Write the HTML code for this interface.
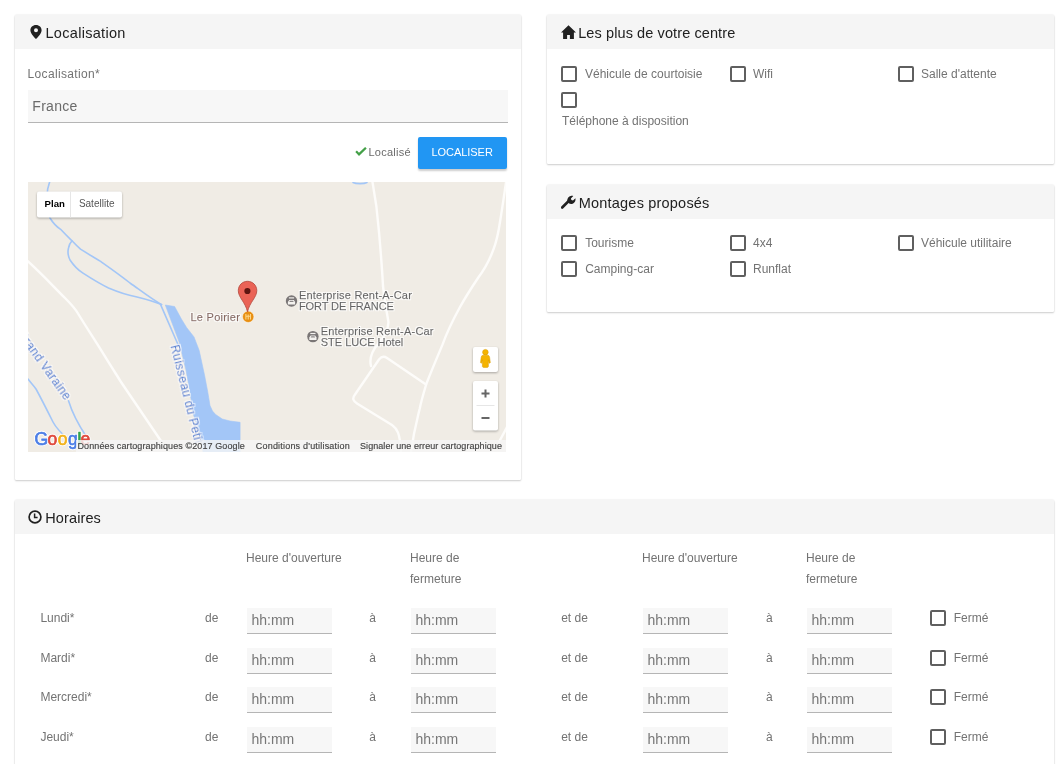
<!DOCTYPE html><html><head><meta charset="utf-8"><style>
*{box-sizing:border-box;margin:0;padding:0}
html,body{width:1064px;height:764px;overflow:hidden;background:#fff;font-family:"Liberation Sans",sans-serif}
#root{position:absolute;left:0;top:0;width:1064px;height:764px;will-change:transform}
.card{position:absolute;background:#fff;border-radius:1px;overflow:hidden;box-shadow:0 1px 2px 0 rgba(0,0,0,.18),0 0 1.5px 0 rgba(0,0,0,.16)}
.hd{position:absolute;left:0;top:0;right:0;height:34px;background:#f5f5f5}
.t{position:absolute;white-space:nowrap;line-height:1}
.cb{position:absolute;width:16px;height:16px;border:2px solid #5f5f5f;border-radius:2px}
.inp{position:absolute;background:#f7f7f7;border-bottom:1px solid #b5b5b5}
</style></head><body><div id="root">
<div class="card" style="left:15px;top:15px;width:506px;height:465px"><div class="hd"></div></div>
<div class="card" style="left:547px;top:15px;width:507px;height:149px"><div class="hd"></div></div>
<div class="card" style="left:547px;top:185px;width:507px;height:127px"><div class="hd"></div></div>
<div class="card" style="left:15px;top:500px;width:1039px;height:300px"><div class="hd"></div></div>
<svg style="position:absolute;left:30px;top:25px" width="12" height="14" viewBox="0 0 12 14"><path d="M6 0C2.7 0 0.4 2.4 0.4 5.4C0.4 8.6 6 14 6 14S11.6 8.6 11.6 5.4C11.6 2.4 9.3 0 6 0ZM6 3.2A2 2 0 1 1 6 7.2A2 2 0 1 1 6 3.2Z" fill="#212121" fill-rule="evenodd"/></svg>
<div class="t" style="left:45.5px;top:25.53px;font-size:14.5px;color:#212121;letter-spacing:0.3px">Localisation</div>
<div class="t" style="left:27.5px;top:67.94px;font-size:12px;color:#737373;letter-spacing:0.35px">Localisation*</div>
<div class="inp" style="left:28px;top:90px;width:480px;height:33px"></div>
<div class="t" style="left:32.3px;top:98.95px;font-size:14px;color:#6b6b6b;letter-spacing:0.3px">France</div>
<svg style="position:absolute;left:355px;top:147px" width="12" height="10" viewBox="0 0 12 10"><path d="M0.3 5L4 8.9L11.7 1.6L10.1 0L4 5.8L1.9 3.4Z" fill="#43a047"/></svg>
<div class="t" style="left:368.5px;top:146.99px;font-size:11px;color:#6b6b6b;letter-spacing:0.25px">Localisé</div>
<div style="position:absolute;left:418px;top:137px;width:89px;height:32px;background:#2196f3;border-radius:2px;box-shadow:0 2px 2px rgba(0,0,0,.2)"></div>
<div class="t" style="left:431.5px;top:146.99px;font-size:11px;color:#fff;letter-spacing:-0.05px">LOCALISER</div>
<svg style="position:absolute;left:28px;top:182px" width="478" height="270" viewBox="28 182 478 270">
<defs>
<filter id="halo" x="-10%" y="-30%" width="120%" height="160%"><feMorphology in="SourceAlpha" operator="dilate" radius="1"/><feGaussianBlur stdDeviation="0.5"/><feColorMatrix type="matrix" values="0 0 0 0 1  0 0 0 0 1  0 0 0 0 1  0 0 0 0.8 0"/><feMerge><feMergeNode/><feMergeNode in="SourceGraphic"/></feMerge></filter>
</defs>
<rect x="28" y="182" width="478" height="270" fill="#f0ece5"/>
<g fill="none" stroke="#fdfcfa" stroke-width="2.4" stroke-linecap="round" stroke-linejoin="round">
<path d="M27 260.5C40 272 52 285 65 298C72 305 76 310 78 313.5C88 330 97 343 104.5 355.7C112 368 118 377 121 382L161 441L168 452.5"/>
<path d="M372.3 181C375 195 377.5 212 379 232C381 255 382.3 272 383 286C385 305 388 318 388.4 322C388.5 330 384 337 378 344C372 351 369 358 371 366"/>
<path d="M506 182.5C504 196 502 210 500 222C498 235 496 243 493.5 249.2C489 262 484 270 478 278C470 290 465 298 460 307C454 318 447 332 442.4 344.9C436 360 431 372 426.3 384C423 395 421 402 419.7 408.7C417 420 414 430 411 452"/>
<path d="M426 384.5L387 358C384 356 381 357 379 359.5L355 394.5C352 398.5 353 401 357 403.5L392 425C397 428.5 400 433 401 452"/>
<path d="M507 427L499 442"/>
</g>
<g fill="none" stroke="#a3c6f7" stroke-width="1.6" stroke-linecap="round" stroke-linejoin="round">
<path d="M50 181C48 186 46.5 192 47 200C48 210 49 216 50 218C53 223 57 227 60.6 229.3C64 233 68 237 72 240.8C75 244 78 247 80.5 249.2C88 254 95 258 100.6 261.4C110 268 120 275 130 283C140 290 150 298 161.5 304.6"/>
<path d="M72 240.8C70 243 69 245 68.5 248C67.5 252 68 256 70 260C74 266 78 270 83 273.2C92 279 100 284 108.5 288C118 292 127 295 136 296.8C145 299 153 301 161.5 304.6"/>
<path d="M160.5 304.4L178.3 345.3"/>
<path d="M28 379C31 383 34 386 36 389C42 400 48 412 53 422C56 428 62 434 70 441"/>
<path d="M68.5 400.7C72 412 78 424 86 436"/>
<path d="M353 182.5C356 184 364 184 367 182.5"/>
</g>
<polygon points="165.3,305 174.6,306.5 181.4,319 186.6,327.5 194,336.9 199.2,350.5 204.5,375 207.8,392.2 210,405.6 212.5,411 215.6,414.5 222.3,419 230,421 240.1,422.3 240.1,452 203,452 201.2,436.7 193.4,414.5 190,392.2 186,370 179.2,342" fill="#a3c6f7" stroke="#a3c6f7" stroke-width="0.6" stroke-linejoin="round"/>
<g font-family="Liberation Sans" font-size="11" filter="url(#halo)" stroke-width="0.25">
<text stroke="#86665e" x="190.5" y="321.3" fill="#86665e" letter-spacing="0.25">Le Poirier</text>
<text stroke="#626262" x="299" y="298.5" fill="#626262" letter-spacing="0.2">Enterprise Rent-A-Car</text>
<text stroke="#626262" x="299" y="310.3" fill="#626262" letter-spacing="-0.1">FORT DE FRANCE</text>
<text stroke="#626262" x="320.7" y="334.7" fill="#626262" letter-spacing="0.2">Enterprise Rent-A-Car</text>
<text stroke="#626262" x="320.7" y="345.8" fill="#626262">STE LUCE Hotel</text>
<text stroke="#5a87d3" transform="translate(170.5,346) rotate(76)" fill="#5a87d3" font-size="12" letter-spacing="0.45">Ruisseau du Petit</text>
<text stroke="#5a87d3" text-anchor="end" transform="translate(65.3,401.3) rotate(54.4)" fill="#5a87d3" font-size="12" letter-spacing="0.45">Grand Varaine</text>
</g>
<!-- car icons -->
<g id="car1">
<circle cx="291.5" cy="301" r="5.7" fill="#7a7676"/>
<path d="M288.9 297.3H294.1V298.5H288.9Z" fill="#f4f2ef"/>
<path d="M287.9 304.4V301.9L289.2 299.9H293.8L295.1 301.9V304.4Z" fill="#f4f2ef"/>
<path d="M289.9 300.7H293.1L293.7 302H289.3Z" fill="#8a8686"/>
</g>
<use href="#car1" transform="translate(21.4,35.6)"/>
<!-- restaurant icon -->
<circle cx="248.2" cy="316.8" r="5.7" fill="#e88f12" stroke="#fff" stroke-width="0.5"/>
<path d="M245.9 313.9V319.6M248.2 314.6V319.6M250.5 313.9V319.6M245.9 316.3H250.5" stroke="#fcd78a" stroke-width="1.1"/>
<!-- marker -->
<path d="M247.5 281.3C242.3 281.3 238.3 285.4 238.3 290.6C238.3 297.5 245.3 302 247.5 311.8C249.7 302 256.8 297.5 256.8 290.6C256.8 285.4 252.7 281.3 247.5 281.3Z" fill="#ea6356" stroke="#b3463b" stroke-width="0.8"/>
<circle cx="247.4" cy="291" r="3.1" fill="#5e1510"/>
<!-- google logo -->
<g font-family="Liberation Sans" font-size="17.5" stroke="#fff" stroke-width="2.4" stroke-linejoin="round"><text x="34.5" y="445" fill="#fff">G</text><text x="47.6" y="445" fill="#fff">o</text><text x="57.8" y="445" fill="#fff">o</text><text x="68" y="445" fill="#fff">g</text><text x="77.6" y="445" fill="#fff">l</text><text x="80.5" y="445" fill="#fff">e</text></g>
<g font-family="Liberation Sans" font-size="17.5" stroke-width="0.7"><text x="34.5" y="445" fill="#4c7ee6" stroke="#4c7ee6">G</text><text x="47.6" y="445" fill="#df4a3c" stroke="#df4a3c">o</text><text x="57.8" y="445" fill="#f2b21a" stroke="#f2b21a">o</text><text x="68" y="445" fill="#4c7ee6" stroke="#4c7ee6">g</text><text x="77.6" y="445" fill="#32a350" stroke="#32a350">l</text><text x="80.5" y="445" fill="#df4a3c" stroke="#df4a3c">e</text></g>
<!-- attribution bar -->
<rect x="76" y="440" width="430" height="12" fill="#f5f5f5" fill-opacity="0.82"/>
<g font-family="Liberation Sans" font-size="9" fill="#444" stroke="#444" stroke-width="0.15">
<text x="77.5" y="448.8" letter-spacing="0.1">Données cartographiques ©2017 Google</text>
<text x="255.8" y="448.8" letter-spacing="0.2">Conditions d'utilisation</text>
<text x="360" y="448.8" letter-spacing="0.07">Signaler une erreur cartographique</text>
</g>
<!-- plan/satellite -->
<rect x="37" y="191.5" width="85" height="26" rx="2" fill="#fff" style="filter:drop-shadow(0 1px 1px rgba(0,0,0,.3))"/>
<line x1="70.5" y1="191.5" x2="70.5" y2="217.5" stroke="#e6e6e6" stroke-width="1"/>
<text x="44.6" y="206.8" font-family="Liberation Sans" font-size="9.6" font-weight="bold" fill="#000">Plan</text>
<text x="78.9" y="206.8" font-family="Liberation Sans" font-size="10" fill="#565656">Satellite</text>
<!-- pegman -->
<rect x="473" y="347" width="25" height="25" rx="2" fill="#fff" style="filter:drop-shadow(0 1px 1px rgba(0,0,0,.3))"/>
<g fill="#f5b400" stroke="#d99a00" stroke-width="0.5">
<circle cx="485.4" cy="352.2" r="2.8"/>
<path d="M483 355.2H487.8Q489.3 355.4 489.6 357.2L490.3 362.6Q490 363.5 489.1 363L488.4 359.8V366.6Q488.2 367.4 487.3 367.4H483.5Q482.6 367.4 482.4 366.6V359.8L481.7 363Q480.8 363.5 480.5 362.6L481.2 357.2Q481.5 355.4 483 355.2Z"/>
</g>
<!-- zoom -->
<rect x="473" y="381" width="25" height="49.5" rx="2" fill="#fff" style="filter:drop-shadow(0 1px 1px rgba(0,0,0,.3))"/>
<line x1="476.5" y1="405.5" x2="494.5" y2="405.5" stroke="#e6e6e6" stroke-width="1"/>
<path d="M481.5 393.5H489.5M485.5 389.5V397.5M481.5 418H489.5" stroke="#666" stroke-width="2"/>
</svg>

<svg style="position:absolute;left:561px;top:24.5px" width="15" height="14.5" viewBox="0 0 15 14.5"><path d="M7.5 0.3L0 7.6H2.1V14.3H6.1V10H8.9V14.3H12.9V7.6H15Z" fill="#212121"/></svg>
<div class="t" style="left:578.2px;top:25.53px;font-size:14.5px;color:#212121;letter-spacing:0.1px">Les plus de votre centre</div>
<div class="cb" style="left:561px;top:66px"></div>
<div class="t" style="left:585px;top:67.64px;font-size:12px;color:#737373;">Véhicule de courtoisie</div>
<div class="cb" style="left:730px;top:66px"></div>
<div class="t" style="left:753px;top:67.64px;font-size:12px;color:#737373;">Wifi</div>
<div class="cb" style="left:898px;top:66px"></div>
<div class="t" style="left:921px;top:67.64px;font-size:12px;color:#737373;">Salle d'attente</div>
<div class="cb" style="left:561px;top:92px"></div>
<div class="t" style="left:562px;top:114.64px;font-size:12px;color:#737373;">Téléphone à disposition</div>
<svg style="position:absolute;left:561px;top:195px" width="15" height="15" viewBox="0 0 15 15"><path d="M1.2 12.5L7.2 6.5" stroke="#212121" stroke-width="2.6" stroke-linecap="round"/><path d="M6.5 6.8C5.8 4.6 6.8 1.6 9.8 0.9C10.9 0.7 11.8 0.9 12.3 1.1L9.9 3.5L10.4 5.1L12 5.6L14.4 3.2C14.7 4.3 14.6 6.0 13.3 7.5C11.6 9.3 9.5 9.3 8.2 8.6Z" fill="#212121"/></svg>
<div class="t" style="left:578.8px;top:195.73px;font-size:14.5px;color:#212121;letter-spacing:0.2px">Montages proposés</div>
<div class="cb" style="left:561px;top:235px"></div>
<div class="t" style="left:585.2px;top:236.84px;font-size:12px;color:#737373;">Tourisme</div>
<div class="cb" style="left:730px;top:235px"></div>
<div class="t" style="left:753px;top:236.84px;font-size:12px;color:#737373;">4x4</div>
<div class="cb" style="left:898px;top:235px"></div>
<div class="t" style="left:921px;top:236.84px;font-size:12px;color:#737373;">Véhicule utilitaire</div>
<div class="cb" style="left:561px;top:261px"></div>
<div class="t" style="left:585.2px;top:263.14px;font-size:12px;color:#737373;">Camping-car</div>
<div class="cb" style="left:730px;top:261px"></div>
<div class="t" style="left:753px;top:263.14px;font-size:12px;color:#737373;">Runflat</div>
<svg style="position:absolute;left:28px;top:510px" width="14" height="14" viewBox="0 0 14 14"><circle cx="7" cy="7" r="5.9" fill="none" stroke="#212121" stroke-width="1.7"/><path d="M6.6 3.6V7.6H9.6" fill="none" stroke="#212121" stroke-width="1.5"/></svg>
<div class="t" style="left:45.3px;top:511.23px;font-size:14.5px;color:#212121;letter-spacing:0.1px">Horaires</div>
<div class="t" style="left:246px;top:552.24px;font-size:12px;color:#737373;">Heure d'ouverture</div>
<div class="t" style="left:642px;top:552.24px;font-size:12px;color:#737373;">Heure d'ouverture</div>
<div class="t" style="left:410px;top:552.24px;font-size:12px;color:#737373;">Heure de</div>
<div class="t" style="left:410px;top:572.84px;font-size:12px;color:#737373;">fermeture</div>
<div class="t" style="left:806px;top:552.24px;font-size:12px;color:#737373;">Heure de</div>
<div class="t" style="left:806px;top:572.84px;font-size:12px;color:#737373;">fermeture</div>
<div class="t" style="left:40.4px;top:612.14px;font-size:12px;color:#737373;">Lundi*</div>
<div class="t" style="left:205px;top:612.14px;font-size:12px;color:#737373;">de</div>
<div class="t" style="left:369.2px;top:612.14px;font-size:12px;color:#737373;">à</div>
<div class="t" style="left:561.2px;top:612.14px;font-size:12px;color:#737373;">et de</div>
<div class="t" style="left:766px;top:612.14px;font-size:12px;color:#737373;">à</div>
<div class="inp" style="left:247px;top:608px;width:85px;height:26px"></div>
<div class="t" style="left:251.5px;top:613.15px;font-size:14px;color:#777;">hh:mm</div>
<div class="inp" style="left:411px;top:608px;width:85px;height:26px"></div>
<div class="t" style="left:415.5px;top:613.15px;font-size:14px;color:#777;">hh:mm</div>
<div class="inp" style="left:643px;top:608px;width:85px;height:26px"></div>
<div class="t" style="left:647.5px;top:613.15px;font-size:14px;color:#777;">hh:mm</div>
<div class="inp" style="left:807px;top:608px;width:85px;height:26px"></div>
<div class="t" style="left:811.5px;top:613.15px;font-size:14px;color:#777;">hh:mm</div>
<div class="cb" style="left:929.8px;top:609.8px"></div>
<div class="t" style="left:953.7px;top:612.14px;font-size:12px;color:#737373;">Fermé</div>
<div class="t" style="left:40.4px;top:652.14px;font-size:12px;color:#737373;">Mardi*</div>
<div class="t" style="left:205px;top:652.14px;font-size:12px;color:#737373;">de</div>
<div class="t" style="left:369.2px;top:652.14px;font-size:12px;color:#737373;">à</div>
<div class="t" style="left:561.2px;top:652.14px;font-size:12px;color:#737373;">et de</div>
<div class="t" style="left:766px;top:652.14px;font-size:12px;color:#737373;">à</div>
<div class="inp" style="left:247px;top:648px;width:85px;height:26px"></div>
<div class="t" style="left:251.5px;top:653.15px;font-size:14px;color:#777;">hh:mm</div>
<div class="inp" style="left:411px;top:648px;width:85px;height:26px"></div>
<div class="t" style="left:415.5px;top:653.15px;font-size:14px;color:#777;">hh:mm</div>
<div class="inp" style="left:643px;top:648px;width:85px;height:26px"></div>
<div class="t" style="left:647.5px;top:653.15px;font-size:14px;color:#777;">hh:mm</div>
<div class="inp" style="left:807px;top:648px;width:85px;height:26px"></div>
<div class="t" style="left:811.5px;top:653.15px;font-size:14px;color:#777;">hh:mm</div>
<div class="cb" style="left:929.8px;top:649.8px"></div>
<div class="t" style="left:953.7px;top:652.14px;font-size:12px;color:#737373;">Fermé</div>
<div class="t" style="left:40.4px;top:691.34px;font-size:12px;color:#737373;">Mercredi*</div>
<div class="t" style="left:205px;top:691.34px;font-size:12px;color:#737373;">de</div>
<div class="t" style="left:369.2px;top:691.34px;font-size:12px;color:#737373;">à</div>
<div class="t" style="left:561.2px;top:691.34px;font-size:12px;color:#737373;">et de</div>
<div class="t" style="left:766px;top:691.34px;font-size:12px;color:#737373;">à</div>
<div class="inp" style="left:247px;top:687px;width:85px;height:26px"></div>
<div class="t" style="left:251.5px;top:692.15px;font-size:14px;color:#777;">hh:mm</div>
<div class="inp" style="left:411px;top:687px;width:85px;height:26px"></div>
<div class="t" style="left:415.5px;top:692.15px;font-size:14px;color:#777;">hh:mm</div>
<div class="inp" style="left:643px;top:687px;width:85px;height:26px"></div>
<div class="t" style="left:647.5px;top:692.15px;font-size:14px;color:#777;">hh:mm</div>
<div class="inp" style="left:807px;top:687px;width:85px;height:26px"></div>
<div class="t" style="left:811.5px;top:692.15px;font-size:14px;color:#777;">hh:mm</div>
<div class="cb" style="left:929.8px;top:688.8px"></div>
<div class="t" style="left:953.7px;top:691.34px;font-size:12px;color:#737373;">Fermé</div>
<div class="t" style="left:40.4px;top:731.14px;font-size:12px;color:#737373;">Jeudi*</div>
<div class="t" style="left:205px;top:731.14px;font-size:12px;color:#737373;">de</div>
<div class="t" style="left:369.2px;top:731.14px;font-size:12px;color:#737373;">à</div>
<div class="t" style="left:561.2px;top:731.14px;font-size:12px;color:#737373;">et de</div>
<div class="t" style="left:766px;top:731.14px;font-size:12px;color:#737373;">à</div>
<div class="inp" style="left:247px;top:727px;width:85px;height:26px"></div>
<div class="t" style="left:251.5px;top:732.15px;font-size:14px;color:#777;">hh:mm</div>
<div class="inp" style="left:411px;top:727px;width:85px;height:26px"></div>
<div class="t" style="left:415.5px;top:732.15px;font-size:14px;color:#777;">hh:mm</div>
<div class="inp" style="left:643px;top:727px;width:85px;height:26px"></div>
<div class="t" style="left:647.5px;top:732.15px;font-size:14px;color:#777;">hh:mm</div>
<div class="inp" style="left:807px;top:727px;width:85px;height:26px"></div>
<div class="t" style="left:811.5px;top:732.15px;font-size:14px;color:#777;">hh:mm</div>
<div class="cb" style="left:929.8px;top:728.8px"></div>
<div class="t" style="left:953.7px;top:731.14px;font-size:12px;color:#737373;">Fermé</div>
</div></body></html>
